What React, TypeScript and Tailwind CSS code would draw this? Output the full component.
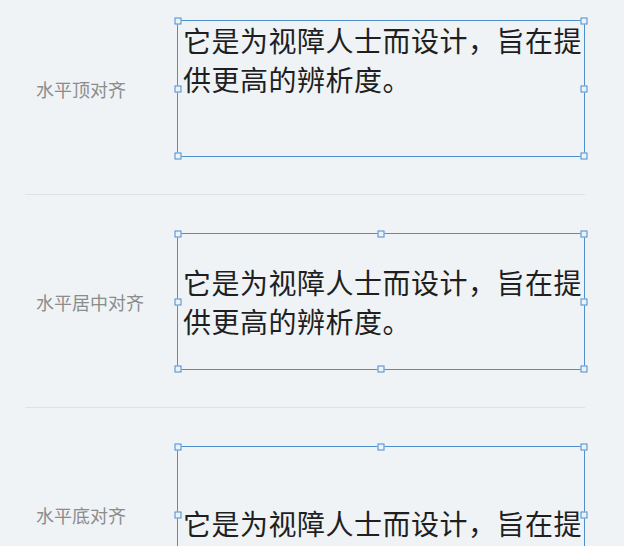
import React from 'react';

const TEXT = '它是为视障人士而设计，旨在提供更高的辨析度。';

type Align = 'top' | 'middle' | 'bottom';

const Handle = ({ className }: { className: string }) => (
  <span
    className={`absolute w-[7px] h-[7px] border border-[#4a8cc9] bg-[#eaf3fb] -translate-x-1/2 -translate-y-1/2 ${className}`}
  />
);

const Row = ({ label, align, midHandles }: { label: string; align: Align; midHandles: boolean }) => {
  const justify: Record<Align, string> = {
    top: 'justify-start',
    middle: 'justify-center',
    bottom: 'justify-end',
  };

  return (
    <div className="flex items-center pt-[38px] pb-[37px] border-b border-[#dde2e6]">
      <div className="w-[152px] pl-[11px] text-[18px] text-[#8c8c8c] leading-none">{label}</div>
      <div className={`relative flex flex-col ${justify[align]} w-[408px] h-[137px] border border-[#4f90cc] pl-[5px]`}>
        <p className="text-[28px] leading-[39px] tracking-[0.5px] text-[#1f1f1f]">{TEXT}</p>
        <Handle className="left-0 top-0" />
        <Handle className="left-0 top-1/2" />
        <Handle className="left-0 top-full" />
        <Handle className="left-full top-0" />
        <Handle className="left-full top-1/2" />
        <Handle className="left-full top-full" />
        {midHandles && (
          <>
            <Handle className="left-1/2 top-0" />
            <Handle className="left-1/2 top-full" />
          </>
        )}
      </div>
    </div>
  );
};

export default function App() {
  return (
    <div
      className="w-[624px] h-[546px] overflow-hidden bg-[#eff3f6]"
      style={{ fontFamily: '"Noto Sans CJK SC", "Noto Sans", sans-serif' }}
    >
      <div className="-mt-[18px] ml-[25px] w-[560px]">
        <Row label="水平顶对齐" align="top" midHandles={false} />
        <Row label="水平居中对齐" align="middle" midHandles />
        <Row label="水平底对齐" align="bottom" midHandles />
      </div>
    </div>
  );
}
